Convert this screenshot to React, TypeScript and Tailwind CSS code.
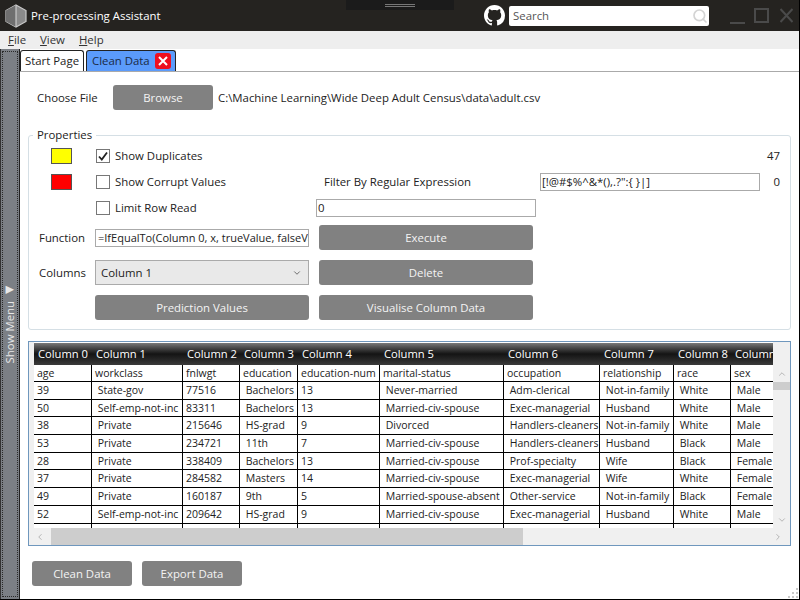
import { ChevronDown, ChevronLeft, ChevronRight, ChevronUp, Search } from "lucide-react";

const FONT = "font-['Open_Sans','Noto_Sans',sans-serif]";

const columnWidths = [57, 91, 57, 58, 82, 124, 96, 74, 57, 44];

const headers = ["Column 0", "Column 1", "Column 2", "Column 3", "Column 4", "Column 5", "Column 6", "Column 7", "Column 8", "Column 9"];

const names = ["age", "workclass", "fnlwgt", "education", "education-num", "marital-status", "occupation", "relationship", "race", "sex"];

const rows = [
  ["39", "State-gov", "77516", "Bachelors", "13", "Never-married", "Adm-clerical", "Not-in-family", "White", "Male"],
  ["50", "Self-emp-not-inc", "83311", "Bachelors", "13", "Married-civ-spouse", "Exec-managerial", "Husband", "White", "Male"],
  ["38", "Private", "215646", "HS-grad", "9", "Divorced", "Handlers-cleaners", "Not-in-family", "White", "Male"],
  ["53", "Private", "234721", "11th", "7", "Married-civ-spouse", "Handlers-cleaners", "Husband", "Black", "Male"],
  ["28", "Private", "338409", "Bachelors", "13", "Married-civ-spouse", "Prof-specialty", "Wife", "Black", "Female"],
  ["37", "Private", "284582", "Masters", "14", "Married-civ-spouse", "Exec-managerial", "Wife", "White", "Female"],
  ["49", "Private", "160187", "9th", "5", "Married-spouse-absent", "Other-service", "Not-in-family", "Black", "Female"],
  ["52", "Self-emp-not-inc", "209642", "HS-grad", "9", "Married-civ-spouse", "Exec-managerial", "Husband", "White", "Male"],
];

// columns whose values carry the csv's leading space
const indented = [1, 3, 5, 6, 7, 8, 9];

function GrayButton({ label, className }: { label: string; className: string }) {
  return (
    <button className={`flex items-center justify-center rounded-[3px] bg-[#818181] text-[11.4px] text-[#f4f4f4] ${className}`}>
      {label}
    </button>
  );
}

function Swatch({ color }: { color: string }) {
  return <div className={`h-[16px] w-[21px] border border-[#555] ${color}`}></div>;
}

function CheckRow({ label, checked }: { label: string; checked?: boolean }) {
  return (
    <div className="flex items-center gap-[5px]">
      <div className="flex h-[14px] w-[14px] items-center justify-center border border-[#777] bg-white">
        {checked && (
          <svg viewBox="0 0 12 12" className="h-[12px] w-[12px]">
            <path d="M2 6.5 L4.8 9.5 L10 2.5" fill="none" stroke="#222" strokeWidth="1.8" />
          </svg>
        )}
      </div>
      <span className="text-[11.4px] leading-none">{label}</span>
    </div>
  );
}

function Logo() {
  return (
    <svg viewBox="0 0 22 24" className="h-[24px] w-[22px]">
      <path d="M11 1 L21 6.5 V17.5 L11 23 L1 17.5 V6.5 Z" fill="#8a8a8a" stroke="#c9c9c9" strokeWidth="1.2" />
      <path d="M11 1 V23 L1 17.5 V6.5 Z" fill="#6f6f6f" />
      <path d="M11 1 V23" stroke="#d8d8d8" strokeWidth="1" />
    </svg>
  );
}

function GithubMark() {
  return (
    <svg viewBox="0 0 16 16" className="h-[21px] w-[21px]" fill="#fff">
      <path d="M8 0C3.58 0 0 3.58 0 8c0 3.54 2.29 6.53 5.47 7.59.4.07.55-.17.55-.38 0-.19-.01-.82-.01-1.49-2.01.37-2.53-.49-2.69-.94-.09-.23-.48-.94-.82-1.13-.28-.15-.68-.52-.01-.53.63-.01 1.08.58 1.23.82.72 1.21 1.87.87 2.33.66.07-.52.28-.87.51-1.07-1.78-.2-3.64-.89-3.64-3.95 0-.87.31-1.59.82-2.15-.08-.2-.36-1.02.08-2.12 0 0 .67-.21 2.2.82.64-.18 1.32-.27 2-.27s1.36.09 2 .27c1.53-1.04 2.2-.82 2.2-.82.44 1.1.16 1.92.08 2.12.51.56.82 1.27.82 2.15 0 3.07-1.87 3.75-3.65 3.95.29.25.54.73.54 1.48 0 1.07-.01 1.93-.01 2.2 0 .21.15.46.55.38A8.01 8.01 0 0 0 16 8c0-4.42-3.58-8-8-8z" />
    </svg>
  );
}

function ResizeGrip() {
  const dots = [[8, 0], [4, 4], [8, 4], [0, 8], [4, 8], [8, 8]];
  return (
    <svg viewBox="0 0 10 10" className="absolute bottom-[1px] right-[1px] h-[10px] w-[10px]">
      {dots.map(([x, y]) => (
        <rect key={`${x}-${y}`} x={x} y={y} width="2" height="2" fill="#c8c8c8" />
      ))}
    </svg>
  );
}

function TitleBar() {
  return (
    <div className="relative flex h-[31px] items-center bg-[#252320] pl-[5px] pr-[6px] text-white">
      <Logo />
      <span className="ml-[4px] text-[11.4px]">Pre-processing Assistant</span>
      {/* little drag handle that hangs from the top edge */}
      <div className="absolute left-[346px] top-0 flex h-[10px] w-[108px] items-center justify-center bg-[#1b1b1b]">
        <div className="h-[3px] w-[30px] border-y border-[#777]"></div>
      </div>
      <div className="ml-auto flex items-center">
        <GithubMark />
        <div className="ml-[4px] flex h-[20px] w-[200px] items-center justify-between rounded-[2px] bg-white pl-[4px] pr-[1px]">
          <span className="text-[11.4px] text-[#555]">Search</span>
          <Search size={16} strokeWidth={2.5} className="text-[#d4d4d4]" />
        </div>
        <div className="ml-[21px] flex items-center">
          <div className="mt-[14px] h-[2px] w-[15px] bg-[#4a4a4a]"></div>
          <div className="ml-[9px] h-[15px] w-[15px] border-2 border-[#4a4a4a]"></div>
          <svg viewBox="0 0 13 15" className="ml-[11px] h-[15px] w-[13px]">
            <path d="M0.5 1 L12.5 14 M12.5 1 L0.5 14" stroke="#4a4a4a" strokeWidth="2" />
          </svg>
        </div>
      </div>
    </div>
  );
}

function MenuBar() {
  return (
    <div className="flex h-[18px] items-center gap-[14px] bg-[#eeeeee] pl-[8px] text-[11.4px] text-[#333]">
      <span><u>F</u>ile</span>
      <span><u>V</u>iew</span>
      <span><u>H</u>elp</span>
    </div>
  );
}

function Tabs() {
  return (
    <div className="flex h-[23px] items-end gap-[2px] border-b border-[#aaa]">
      <div className="flex h-[21px] w-[64px] items-center justify-center rounded-t-[3px] border border-b-0 border-[#222] bg-white text-[11.4px]">
        Start Page
      </div>
      <div className="flex h-[21px] w-[90px] items-center gap-[5px] rounded-t-[3px] border border-b-0 border-[#222] bg-[#5b9bfb] pl-[5px] text-[11.4px] text-[#1a2a44]">
        Clean Data
        <div className="flex h-[16px] w-[16px] items-center justify-center rounded-[3px] bg-[#ee0f1e]">
          <svg viewBox="0 0 10 10" className="h-[10px] w-[10px]">
            <path d="M1 1 L9 9 M9 1 L1 9" stroke="#fff" strokeWidth="2" />
          </svg>
        </div>
      </div>
    </div>
  );
}

function Properties() {
  return (
    <div className="relative mx-[8px] mt-[25px] h-[195px] rounded-[3px] border border-[#d5dfe5] px-[10px] pt-[7px]">
      <span className="absolute -top-[8px] left-[4px] bg-white px-[4px] text-[11.4px] leading-[14px]">Properties</span>

      <div className="flex h-[26px] items-center">
        <div className="ml-[12px] w-[45px] shrink-0"><Swatch color="bg-[#ffff00]" /></div>
        <CheckRow label="Show Duplicates" checked />
        <span className="ml-auto text-[11.4px]">47</span>
      </div>
      <div className="flex h-[26px] items-center">
        <div className="ml-[12px] w-[45px] shrink-0"><Swatch color="bg-[#ff0000]" /></div>
        <div className="w-[228px] shrink-0"><CheckRow label="Show Corrupt Values" /></div>
        <span className="w-[216px] shrink-0 text-[11.4px]">Filter By Regular Expression</span>
        <div className="flex h-[18px] w-[220px] items-center border border-[#aaa] pl-[1px] text-[11.4px] leading-none">
          {"[!@#$%^&*(),.?\":{ }|]"}
        </div>
        <span className="ml-auto text-[11.4px]">0</span>
      </div>
      <div className="flex h-[26px] items-center">
        <div className="ml-[12px] w-[45px] shrink-0"></div>
        <div className="w-[220px] shrink-0"><CheckRow label="Limit Row Read" /></div>
        <div className="flex h-[18px] w-[220px] items-center border border-[#aaa] pl-[1px] text-[11.4px] leading-none">0</div>
      </div>

      <div className="mt-[4px] flex h-[25px] items-center">
        <span className="w-[56px] shrink-0 text-[11.4px]">Function</span>
        <div className="flex h-[18px] w-[214px] items-center overflow-hidden whitespace-nowrap border border-[#aaa] pl-[2px] text-[11px] leading-none">
          =IfEqualTo(Column 0, x, trueValue, falseValue)
        </div>
        <GrayButton label="Execute" className="ml-[10px] h-[25px] w-[214px]" />
      </div>
      <div className="mt-[10px] flex h-[25px] items-center">
        <span className="w-[56px] shrink-0 text-[11.4px]">Columns</span>
        <div className="flex h-[25px] w-[214px] items-center justify-between border border-[#aaa] bg-[#e9e9e9] pl-[5px] pr-[6px] text-[11.4px]">
          Column 1
          <ChevronDown size={10} strokeWidth={2} className="text-[#555]" />
        </div>
        <GrayButton label="Delete" className="ml-[10px] h-[25px] w-[214px]" />
      </div>
      <div className="mt-[10px] flex h-[25px] items-center">
        <div className="w-[56px] shrink-0"></div>
        <GrayButton label="Prediction Values" className="h-[25px] w-[214px]" />
        <GrayButton label="Visualise Column Data" className="ml-[10px] h-[25px] w-[214px]" />
      </div>
    </div>
  );
}

function DataGrid() {
  return (
    <div className="mx-[8px] mt-[11px] flex h-[205px] flex-col border border-[#6f97bd]">
      <div className="flex min-h-0 flex-1">
        <div className="w-[5px] shrink-0 bg-[#f0f0f0]"></div>
        <div className="min-w-0 flex-1 overflow-hidden pt-[1px]">
          <div className="flex h-[22px] w-max bg-gradient-to-b from-[#7a7a7a] via-[#141414] to-[#3a3a3a] text-[11.2px] text-white">
            {headers.map((h, i) => (
              <div key={h} className="flex shrink-0 items-center overflow-hidden whitespace-nowrap pl-[4px]" style={{ width: columnWidths[i] + (i === 0 ? 1 : 0) }}>
                {h}
              </div>
            ))}
          </div>
          <div className="w-max">
            <div className="flex h-[17px] border-b border-black text-[10.5px]">
              {names.map((n, i) => (
                <div key={n} className="flex shrink-0 items-center overflow-hidden whitespace-nowrap border-r border-black pl-[3px] pt-[1px]" style={{ width: columnWidths[i] + (i === 0 ? 1 : 0) }}>
                  {n}
                </div>
              ))}
            </div>
            {rows.map((row) => (
              <div key={row[0] + row[2]} className="flex h-[17.7px] border-b border-black text-[10.5px]">
                {row.map((v, i) => (
                  <div
                    key={i}
                    className="flex shrink-0 items-center overflow-hidden whitespace-pre border-r border-black pl-[3px] pt-[1px]"
                    style={{ width: columnWidths[i] + (i === 0 ? 1 : 0) }}
                  >
                    {indented.includes(i) ? ` ${v}` : v}
                  </div>
                ))}
              </div>
            ))}
            <div className="flex h-[8px]">
              {columnWidths.map((w, i) => (
                <div key={i} className="shrink-0 border-r border-black" style={{ width: w + (i === 0 ? 1 : 0) }}></div>
              ))}
            </div>
          </div>
        </div>
        <div className="flex w-[17px] shrink-0 flex-col items-center justify-between bg-[#f0f0f0] pb-[3px] pt-[27px]">
          <div className="flex w-full flex-col items-center">
            <ChevronUp size={10} className="text-[#aaa]" />
            <div className="mt-[3px] h-[8px] w-full bg-[#cdcdcd]"></div>
          </div>
          <ChevronDown size={10} className="text-[#aaa]" />
        </div>
      </div>
      <div className="flex h-[17px] items-center bg-[#f0f0f0]">
        <div className="flex w-[22px] shrink-0 justify-center"><ChevronLeft size={10} className="text-[#aaa]" /></div>
        <div className="h-full w-[472px] bg-[#cdcdcd]"></div>
        <div className="ml-auto flex w-[25px] justify-center"><ChevronRight size={10} className="text-[#aaa]" /></div>
      </div>
    </div>
  );
}

export default function App() {
  return (
    <div className={`relative flex h-[600px] w-[800px] flex-col overflow-hidden border-b border-r border-black bg-white text-[#222] ${FONT}`}>
      <TitleBar />
      <MenuBar />
      <div className="flex min-h-0 flex-1">
        <div className="w-[19px] shrink-0 border-l border-[#333] bg-[#7b7f85] py-[2px] pl-[1px] pr-[1px]">
          <div className="flex h-full items-center justify-center border border-dotted border-[#2a2a2a]">
            <span className="rotate-180 whitespace-nowrap text-[11.4px] leading-none text-[#e8e8e8] [writing-mode:vertical-rl]">
              Show Menu ◀
            </span>
          </div>
        </div>
        <div className="min-w-0 flex-1 border-l border-[#222]">
          <Tabs />
          <div className="mt-[13px] flex h-[25px] items-center pl-[17px] text-[11.4px]">
            <span className="w-[76px]">Choose File</span>
            <GrayButton label="Browse" className="h-[25px] w-[100px]" />
            <span className="ml-[5px]">C:\Machine Learning\Wide Deep Adult Census\data\adult.csv</span>
          </div>
          <Properties />
          <DataGrid />
          <div className="ml-[12px] mt-[15px] flex gap-[10px]">
            <GrayButton label="Clean Data" className="h-[25px] w-[100px]" />
            <GrayButton label="Export Data" className="h-[25px] w-[100px]" />
          </div>
        </div>
      </div>
      <ResizeGrip />
    </div>
  );
}
